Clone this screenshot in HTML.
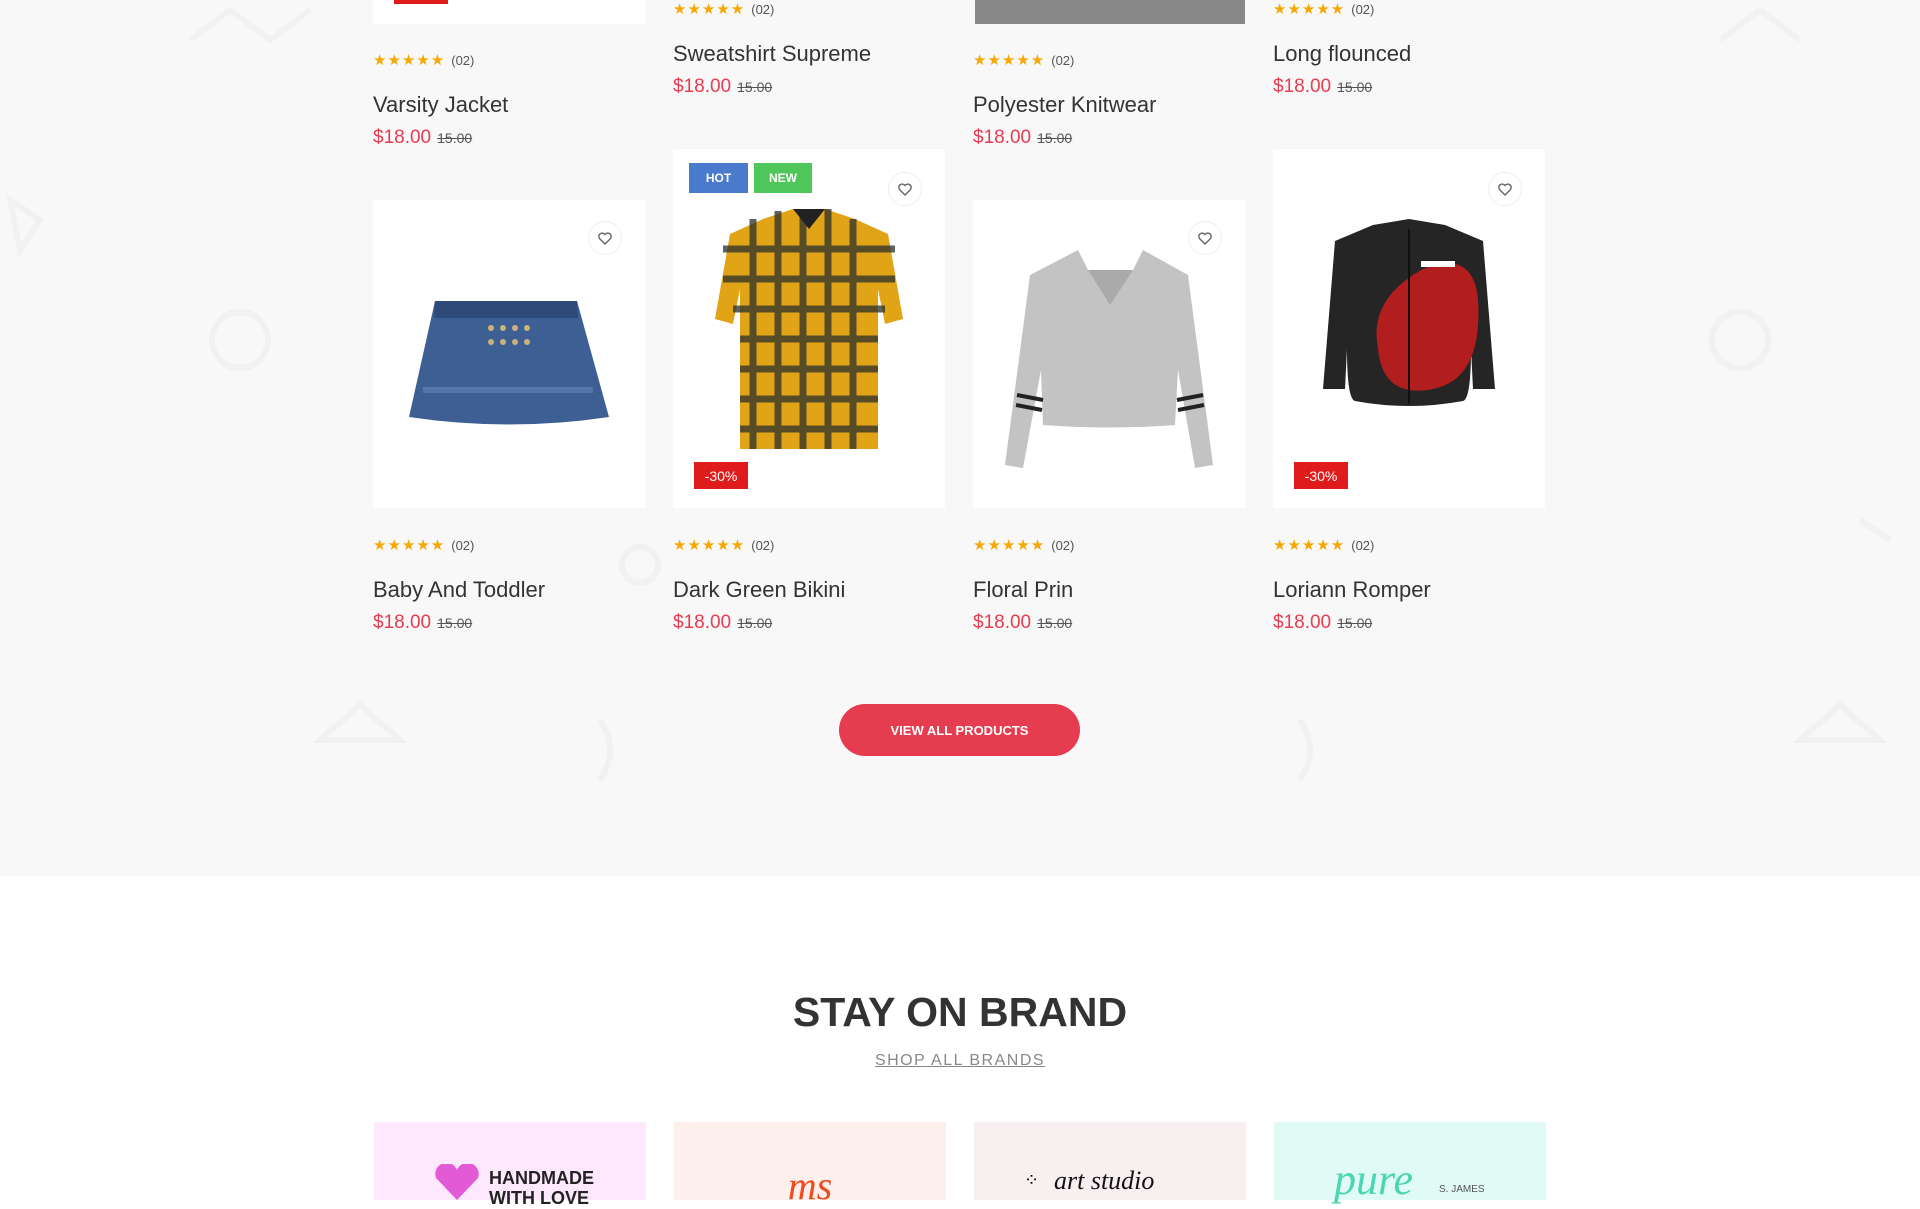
<!DOCTYPE html>
<html><head><meta charset="utf-8"><style>
*{margin:0;padding:0;box-sizing:border-box}
body{width:1920px;height:1200px;position:relative;overflow:hidden;background:#fff;font-family:"Liberation Sans",sans-serif}
.sec{position:absolute;left:0;top:0;width:1920px;height:876px;background:#f8f8f8}
.a{position:absolute}
.img{position:absolute;background:#fff;width:272px}
.stars{position:absolute;color:#f5a800;font-size:15px;letter-spacing:1px;white-space:nowrap}
.stars span{color:#555;font-size:13px;margin-left:6px;letter-spacing:0}
.t{position:absolute;font-size:22px;color:#333;white-space:nowrap}
.p{position:absolute;font-size:19px;color:#e63c50;white-space:nowrap}
.p s{color:#555;font-size:14px;margin-left:6px}
.heart{position:absolute;width:34px;height:34px;border-radius:50%;background:#fff;border:1px solid #eee;display:flex;align-items:center;justify-content:center}
.badge{position:absolute;color:#fff;font-size:12px;font-weight:bold;display:flex;align-items:center;justify-content:center}
.off{position:absolute;background:#e01b1b;color:#fff;font-size:14px;width:54px;height:27px;display:flex;align-items:center;justify-content:center}
.brand{position:absolute;top:1122px;width:272px;height:78px}
</style></head><body>
<div class="sec"></div>
<svg class="a" style="left:0;top:0" width="1920" height="876" fill="none" stroke="#f1f1f1" stroke-width="6">
<circle cx="240" cy="340" r="28"/><circle cx="1740" cy="340" r="28"/><circle cx="640" cy="565" r="18"/><circle cx="1420" cy="380" r="24"/>
<path d="M190 40 l40 -30 l40 30 l40 -30"/><path d="M1720 40 l40 -30 l40 30"/><path d="M320 740 l40 -35 l40 35z"/><path d="M1800 740 l40 -35 l40 35z"/>
<path d="M10 200 l30 20 l-20 30z"/><path d="M1860 520 l30 20"/><path d="M1300 720 q20 30 0 60"/><path d="M600 720 q20 30 0 60"/>
</svg>

<div class="img" style="left:373px;top:-30px;height:54px"></div>
<div class="a" style="left:394px;top:0;width:54px;height:4px;background:#e01b1b"></div>
<div class="a" style="left:975px;top:-30px;width:270px;height:54px;background:#888"></div>

<div class="stars" style="left:373px;top:51px">★★★★★<span>(02)</span></div>
<div class="t" style="left:373px;top:92px">Varsity Jacket</div>
<div class="p" style="left:373px;top:127px">$18.00<s>15.00</s></div>

<div class="stars" style="left:673px;top:0px">★★★★★<span>(02)</span></div>
<div class="t" style="left:673px;top:41px">Sweatshirt Supreme</div>
<div class="p" style="left:673px;top:76px">$18.00<s>15.00</s></div>

<div class="stars" style="left:973px;top:51px">★★★★★<span>(02)</span></div>
<div class="t" style="left:973px;top:92px">Polyester Knitwear</div>
<div class="p" style="left:973px;top:127px">$18.00<s>15.00</s></div>

<div class="stars" style="left:1273px;top:0px">★★★★★<span>(02)</span></div>
<div class="t" style="left:1273px;top:41px">Long flounced</div>
<div class="p" style="left:1273px;top:76px">$18.00<s>15.00</s></div>

<div class="img" style="left:373px;top:200px;height:308px">
<svg width="272" height="308"><path d="M62 101 L204 101 L236 217 Q136 232 36 217Z" fill="#3e5f93"/><path d="M62 101 L204 101 L205 118 L61 118Z" fill="#2e4a78"/><g fill="#c9b37a"><circle cx="118" cy="128" r="3"/><circle cx="130" cy="128" r="3"/><circle cx="142" cy="128" r="3"/><circle cx="154" cy="128" r="3"/><circle cx="118" cy="142" r="3"/><circle cx="130" cy="142" r="3"/><circle cx="142" cy="142" r="3"/><circle cx="154" cy="142" r="3"/></g><path d="M50 190 L220 190" stroke="#6d8bbd" stroke-width="6" opacity=".5"/></svg>
</div>
<div class="heart" style="left:588px;top:221px"><svg width="14" height="13" viewBox="0 0 14 13"><path d="M7 12 L1.5 6.5 A3 3 0 0 1 7 2.5 A3 3 0 0 1 12.5 6.5Z" fill="none" stroke="#666" stroke-width="1.4"/></svg></div>

<div class="img" style="left:673px;top:149px;height:359px">
<svg width="272" height="359"><path d="M90 70 L120 60 L152 60 L182 70 L215 85 L230 170 L212 175 L205 140 L205 300 L67 300 L67 140 L60 175 L42 170 L57 85Z" fill="#e0a416"/><g stroke="#2a2f2a" stroke-width="7" opacity=".75"><path d="M50 100 H222 M50 130 H222 M60 160 H212 M67 190 H205 M67 220 H205 M67 250 H205 M67 280 H205"/><path d="M80 70 V300 M105 62 V300 M130 60 V300 M155 60 V300 M180 70 V300"/></g><path d="M120 60 L136 80 L152 60" fill="#222"/></svg>
</div>
<div class="badge" style="left:689px;top:163px;width:59px;height:30px;background:#4a7acc">HOT</div>
<div class="badge" style="left:754px;top:163px;width:58px;height:30px;background:#4ec65a">NEW</div>
<div class="heart" style="left:888px;top:172px"><svg width="14" height="13" viewBox="0 0 14 13"><path d="M7 12 L1.5 6.5 A3 3 0 0 1 7 2.5 A3 3 0 0 1 12.5 6.5Z" fill="none" stroke="#666" stroke-width="1.4"/></svg></div>
<div class="off" style="left:694px;top:462px">-30%</div>

<div class="img" style="left:973px;top:200px;height:308px">
<svg width="272" height="308"><path d="M105 50 L115 70 L160 70 L170 50 L215 75 L240 265 L222 268 L205 170 L202 225 Q136 230 70 225 L68 170 L50 268 L32 265 L57 75Z" fill="#c3c3c3"/><path d="M115 70 L137 105 L160 70" fill="#aaa"/><g stroke="#222" stroke-width="4"><path d="M44 195 L70 200 M43 205 L69 210 M204 200 L230 195 M205 210 L231 205"/></g></svg>
</div>
<div class="heart" style="left:1188px;top:221px"><svg width="14" height="13" viewBox="0 0 14 13"><path d="M7 12 L1.5 6.5 A3 3 0 0 1 7 2.5 A3 3 0 0 1 12.5 6.5Z" fill="none" stroke="#666" stroke-width="1.4"/></svg></div>

<div class="img" style="left:1273px;top:149px;height:359px">
<svg width="272" height="359"><path d="M100 76 L136 70 L172 76 L210 92 L222 240 L200 240 L198 200 Q198 250 190 252 Q136 262 82 252 Q74 250 74 200 L72 240 L50 240 L62 92Z" fill="#252525"/><path d="M150 120 Q200 100 205 150 Q210 230 160 240 Q110 250 105 200 Q95 150 150 120Z" fill="#b21d1d"/><path d="M136 80 V255" stroke="#111" stroke-width="2"/><rect x="148" y="112" width="34" height="6" fill="#fff"/></svg>
</div>
<div class="heart" style="left:1488px;top:172px"><svg width="14" height="13" viewBox="0 0 14 13"><path d="M7 12 L1.5 6.5 A3 3 0 0 1 7 2.5 A3 3 0 0 1 12.5 6.5Z" fill="none" stroke="#666" stroke-width="1.4"/></svg></div>
<div class="off" style="left:1294px;top:462px">-30%</div>

<div class="stars" style="left:373px;top:536px">★★★★★<span>(02)</span></div>
<div class="t" style="left:373px;top:577px">Baby And Toddler</div>
<div class="p" style="left:373px;top:612px">$18.00<s>15.00</s></div>
<div class="stars" style="left:673px;top:536px">★★★★★<span>(02)</span></div>
<div class="t" style="left:673px;top:577px">Dark Green Bikini</div>
<div class="p" style="left:673px;top:612px">$18.00<s>15.00</s></div>
<div class="stars" style="left:973px;top:536px">★★★★★<span>(02)</span></div>
<div class="t" style="left:973px;top:577px">Floral Prin</div>
<div class="p" style="left:973px;top:612px">$18.00<s>15.00</s></div>
<div class="stars" style="left:1273px;top:536px">★★★★★<span>(02)</span></div>
<div class="t" style="left:1273px;top:577px">Loriann Romper</div>
<div class="p" style="left:1273px;top:612px">$18.00<s>15.00</s></div>

<div class="a" style="left:839px;top:704px;width:241px;height:52px;border-radius:26px;background:#e63c50;color:#fff;font-size:13px;font-weight:bold;display:flex;align-items:center;justify-content:center">VIEW ALL PRODUCTS</div>

<div class="a" style="left:0;top:989px;width:1920px;text-align:center;font-size:41px;font-weight:bold;color:#333">STAY ON BRAND</div>
<div class="a" style="left:0;top:1052px;width:1920px;text-align:center;font-size:16px;color:#888;letter-spacing:1.5px;text-decoration:underline">SHOP ALL BRANDS</div>

<div class="brand" style="left:374px;background:#fde8fd"><svg class="a" style="left:58px;top:42px" width="50" height="36"><path d="M25 36 L4 14 A10 10 0 0 1 25 6 A10 10 0 0 1 46 14Z" fill="#e35ad6"/></svg><div class="a" style="left:115px;top:46px;font-size:18px;font-weight:bold;color:#222;line-height:20px">HANDMADE<br>WITH LOVE</div></div>
<div class="brand" style="left:674px;background:#fdf0ec"><div class="a" style="left:0;width:272px;top:40px;text-align:center;font-family:'Liberation Serif',serif;font-style:italic;font-size:40px;color:#f04a1e">ms</div></div>
<div class="brand" style="left:974px;background:#f8f0f0"><div class="a" style="left:50px;top:48px;font-size:18px;color:#000;letter-spacing:2px">⁘</div><div class="a" style="left:80px;top:44px;font-family:'Liberation Serif',serif;font-style:italic;font-size:26px;color:#111">art studio</div></div>
<div class="brand" style="left:1274px;background:#e0fbf5"><div class="a" style="left:60px;top:32px;font-family:'Liberation Serif',serif;font-style:italic;font-size:44px;color:#4ad6b0">pure</div><div class="a" style="left:165px;top:62px;font-size:10px;color:#555">S. JAMES</div></div>
</body></html>
